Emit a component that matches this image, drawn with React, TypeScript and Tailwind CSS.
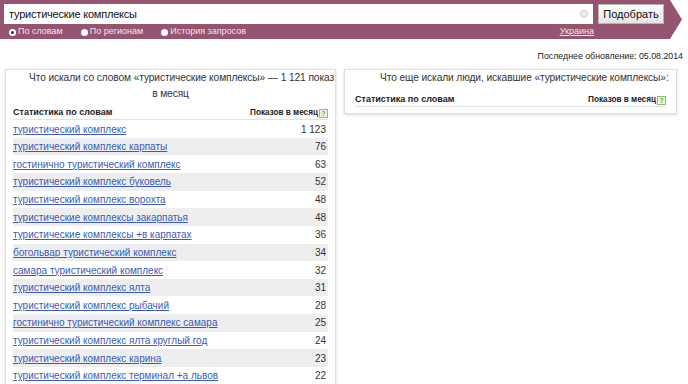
import { useState } from "react";

const rows: [string, string][] = [
  ["туристический комплекс", "1 123"],
  ["туристический комплекс карпаты", "76"],
  ["гостинично туристический комплекс", "63"],
  ["туристический комплекс буковель", "52"],
  ["туристический комплекс ворохта", "48"],
  ["туристические комплексы закарпатья", "48"],
  ["туристические комплексы +в карпатах", "36"],
  ["богольвар туристический комплекс", "34"],
  ["самара туристический комплекс", "32"],
  ["туристический комплекс ялта", "31"],
  ["туристический комплекс рыбачий", "28"],
  ["гостинично туристический комплекс самара", "25"],
  ["туристический комплекс ялта круглый год", "24"],
  ["туристический комплекс карина", "23"],
  ["туристический комплекс терминал +а львов", "22"],
];

const Help = () => (
  <span className="ml-[1px] inline-flex h-[9px] w-[9px] items-center justify-center border border-[#8cbf6a] bg-[#eaf6df] text-[7px] leading-none text-[#6aa544]">
    ?
  </span>
);

const TableHead = () => (
  <div className="flex h-[13px] items-center justify-between border-b border-[#e2e2e2] font-bold text-[#222]">
    <span className="text-[9px]">Статистика по словам</span>
    <span className="flex items-center text-[8.2px]">
      Показов в месяц
      <Help />
    </span>
  </div>
);

const Radio = ({ label, on }: { label: string; on?: boolean }) => (
  <span className="flex items-center gap-[2px]">
    <span className="flex h-[7px] w-[7px] items-center justify-center rounded-full bg-white">
      {on && <span className="h-[3px] w-[3px] rounded-full bg-[#333]" />}
    </span>
    {label}
  </span>
);

export default function App() {
  const [query, setQuery] = useState("туристические комплексы");

  return (
    <div className="h-[384px] w-[688px] overflow-hidden bg-white font-['Liberation_Sans',Arial,sans-serif] text-[#333]">
      <div className="h-[39px] w-[682px] bg-[#955570] pl-[4px] pr-[18px] pt-[4px] [clip-path:polygon(0_0,calc(100%-12px)_0,100%_50%,calc(100%-12px)_100%,0_100%)]">
        <div className="flex h-[20px] items-center gap-[5px]">
          <div className="flex h-full flex-1 items-center bg-white pl-[5px] pr-[5px]">
            <input
              value={query}
              onChange={(e) => setQuery(e.target.value)}
              className="flex-1 bg-transparent text-[11px] tracking-[-0.2px] text-[#111] outline-none"
            />
            <span className="h-[8px] w-[8px] rounded-full border border-[#ccc] bg-[#eee]" />
          </div>
          <button className="h-[20px] w-[66px] border border-[#b5b5b5] bg-gradient-to-b from-white to-[#e4e4e4] text-[11px] text-[#111]">
            Подобрать
          </button>
        </div>
        <div className="mt-[2px] flex h-[12px] items-center pr-[70px] text-[9px] text-[#f3e3ea]">
          <div className="ml-[5px] flex gap-[18px]">
            <Radio label="По словам" on />
            <Radio label="По регионам" />
            <Radio label="История запросов" />
          </div>
          <span className="ml-auto underline">Украина</span>
        </div>
      </div>

      <div className="mt-[11px] pr-[5px] text-right text-[8.8px] text-[#222]">
        Последнее обновление: 05.08.2014
      </div>

      <div className="mt-[6px] flex items-start gap-[8px] pl-[5px]">
        <div className="w-[331px] border border-[#dedede] px-[7px] pb-[10px] shadow-[0_1px_3px_rgba(0,0,0,0.15)]">
          <div className="mb-[5px] text-[10.2px] leading-[16px] tracking-[-0.1px] text-[#333]">
            <div className="whitespace-nowrap pl-[16px]">
              Что искали со словом «туристические комплексы» — 1 121 показ
            </div>
            <div className="text-center">в месяц</div>
          </div>
          <TableHead />
          <div>
            {rows.map(([w, n], i) => (
              <div
                key={w}
                className={`flex h-[17.64px] items-center justify-between pr-[2px] text-[10px] ${
                  i % 2 === 1 ? "bg-[#eeeeee]" : ""
                }`}
              >
                <a href="#" className="text-[#3a5bb8] underline">
                  {w}
                </a>
                <span className="text-[#333]">{n}</span>
              </div>
            ))}
          </div>
        </div>

        <div className="w-[333px] border border-[#dedede] px-[10px] pb-[6px] shadow-[0_1px_3px_rgba(0,0,0,0.15)]">
          <div className="mb-[8px] whitespace-nowrap pl-[25px] text-[10.2px] leading-[16px] tracking-[-0.1px] text-[#333]">
            Что еще искали люди, искавшие «туристические комплексы»:
          </div>
          <TableHead />
        </div>
      </div>
    </div>
  );
}
